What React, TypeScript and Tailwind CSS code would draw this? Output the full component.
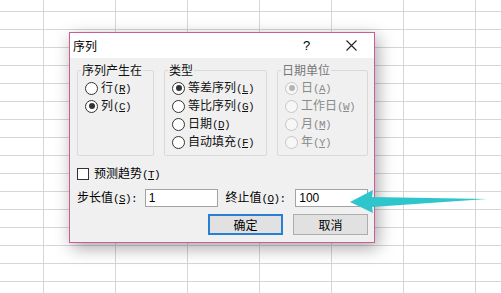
import React from "react";

const cjk = "font-['Noto_Sans_CJK_SC','Noto_Sans',sans-serif]";

const Mn = ({ k, suffix = "" }: { k: string; suffix?: string }) => (
  <span className="font-['Liberation_Mono',monospace] text-[11px] tracking-[-0.6px]">
    (<span className="underline underline-offset-1">{k}</span>){suffix}
  </span>
);

const Radio = ({
  label,
  k,
  checked = false,
  disabled = false,
}: {
  label: string;
  k: string;
  checked?: boolean;
  disabled?: boolean;
}) => (
  <div className="flex items-center h-[18px] gap-[3px]">
    <span
      className={`w-[13px] h-[13px] rounded-full border flex items-center justify-center ${
        disabled ? "border-[#c6c6c6] bg-[#f7f7f7]" : "border-[#333] bg-white"
      }`}
    >
      {checked && (
        <span
          className={`w-[6px] h-[6px] rounded-full ${
            disabled ? "bg-[#b4b4b4]" : "bg-[#333]"
          }`}
        />
      )}
    </span>
    <span className={disabled ? "text-[#8a8a8a]" : "text-[#111]"}>
      {label}
      <Mn k={k} />
    </span>
  </div>
);

const Group = ({
  title,
  width,
  disabled = false,
  children,
}: {
  title: string;
  width: string;
  disabled?: boolean;
  children: React.ReactNode;
}) => (
  <fieldset
    className={`${width} border border-[#d9d9d9] rounded-[2px] pl-[7px] pb-[3px] h-[93px]`}
  >
    <legend
      className={`-ml-[4px] px-[1px] leading-[14px] ${
        disabled ? "text-[#777]" : "text-[#111]"
      }`}
    >
      {title}
    </legend>
    <div className="pt-[2px]">{children}</div>
  </fieldset>
);

export default function App() {
  return (
    <div
      className={`relative w-[501px] h-[293px] overflow-hidden bg-white bg-[linear-gradient(to_right,#d6d6d6_1px,transparent_1px),linear-gradient(to_bottom,#d6d6d6_1px,transparent_1px)] bg-[size:72px_18px] bg-[position:43px_11px] ${cjk} text-[12px]`}
    >
      {/* dialog */}
      <div className="absolute left-[69px] top-[32px] w-[306px] border border-[#cc5c93] bg-[#f0f0f0] shadow-[3px_5px_16px_rgba(0,0,0,0.35)]">
        <div className="flex items-center h-[25px] bg-white">
          <span className="pl-[3px] flex-1 leading-[14px]">序列</span>
          <span className="w-[45px] text-center font-['Liberation_Sans',sans-serif] text-[13px]">
            ?
          </span>
          <span className="w-[45px] flex justify-center">
            <svg width="11" height="11" viewBox="0 0 11 11">
              <path d="M0.5 0.5L10.5 10.5M10.5 0.5L0.5 10.5" stroke="#222" strokeWidth="1.1" />
            </svg>
          </span>
        </div>

        <div className="pl-[7px] pr-[6px] pt-[5px] pb-[7px]">
          <div className="flex gap-[10px]">
            <Group title="序列产生在" width="w-[77px]">
              <Radio label="行" k="R" />
              <Radio label="列" k="C" checked />
            </Group>
            <Group title="类型" width="w-[103px]">
              <Radio label="等差序列" k="L" checked />
              <Radio label="等比序列" k="G" />
              <Radio label="日期" k="D" />
              <Radio label="自动填充" k="F" />
            </Group>
            <Group title="日期单位" width="w-[91px]" disabled>
              <Radio label="日" k="A" checked disabled />
              <Radio label="工作日" k="W" disabled />
              <Radio label="月" k="M" disabled />
              <Radio label="年" k="Y" disabled />
            </Group>
          </div>

          <div className="flex items-center gap-[5px] h-[14px] mt-[11px]">
            <span className="w-[12px] h-[12px] border border-[#333] bg-white" />
            <span>
              预测趋势
              <Mn k="T" />
            </span>
          </div>

          <div className="flex items-center h-[18px] mt-[8px]">
            <span className="w-[68px] leading-[14px]">
              步长值
              <Mn k="S" suffix=":" />
            </span>
            <div className="w-[73px] h-[18px] border border-[#a3a3a3] bg-white pl-[3px] flex items-center font-['Liberation_Sans',sans-serif] text-[12px]">
              1
            </div>
            <span className="ml-[8px] w-[70px] leading-[14px]">
              终止值
              <Mn k="O" suffix=":" />
            </span>
            <div className="w-[73px] h-[18px] border border-[#a3a3a3] bg-white pl-[3px] flex items-center font-['Liberation_Sans',sans-serif] text-[12px]">
              100
            </div>
          </div>

          <div className="flex justify-end gap-[10px] mt-[7px]">
            <button className="w-[75px] h-[21px] border-2 border-[#2a7fd4] bg-[#e1e1e1] leading-[14px]">
              确定
            </button>
            <button className="w-[75px] h-[21px] border border-[#adadad] bg-[#e1e1e1] leading-[14px]">
              取消
            </button>
          </div>
        </div>
      </div>

      {/* arrow annotation */}
      <svg className="absolute left-0 top-0" width="501" height="293" viewBox="0 0 501 293">
        <polygon
          points="350,202 373,190 372,197 487,199 372,207 373,213"
          fill="#2ec6cc"
        />
      </svg>
    </div>
  );
}
